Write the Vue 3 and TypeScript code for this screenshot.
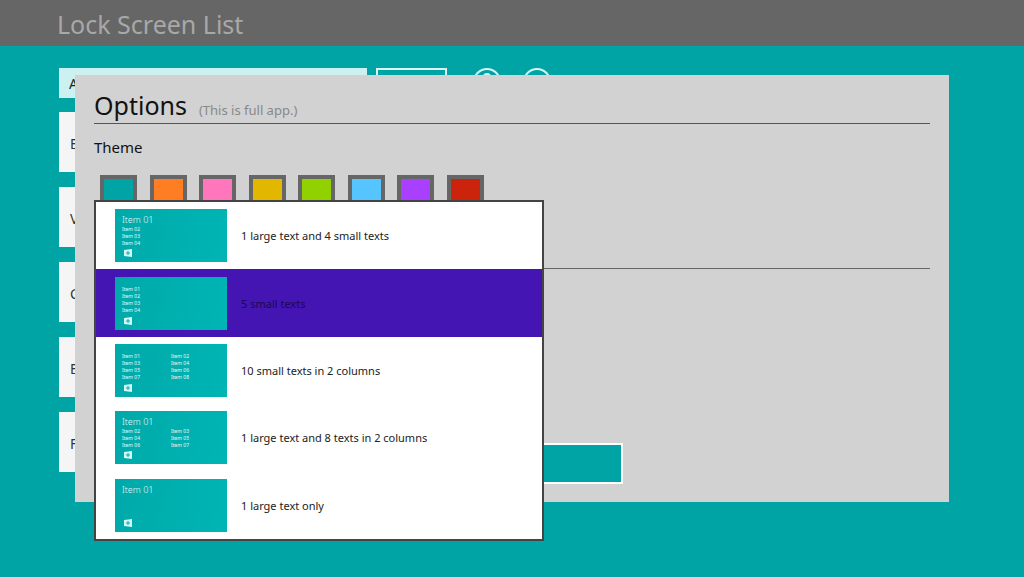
<script setup lang="ts">
import { ref } from 'vue'

interface Layout {
  label: string
  title?: string
  columns: string[][]
}

const entries = ref<string[]>(['B', 'V', 'C', 'B', 'F'])
const draft = ref('A')
const theme = ref('teal')
const selected = ref(1)

const themes = [
  { name: 'teal', color: '#00a4a4' },
  { name: 'orange', color: '#ff7d23' },
  { name: 'pink', color: '#ff76bc' },
  { name: 'yellow', color: '#e1b700' },
  { name: 'green', color: '#91d100' },
  { name: 'blue', color: '#56c5ff' },
  { name: 'purple', color: '#aa40ff' },
  { name: 'red', color: '#cc240c' },
]

const layouts: Layout[] = [
  { label: '1 large text and 4 small texts', title: 'Item 01', columns: [['Item 02', 'Item 03', 'Item 04']] },
  { label: '5 small texts', columns: [['Item 01', 'Item 02', 'Item 03', 'Item 04']] },
  {
    label: '10 small texts in 2 columns',
    columns: [
      ['Item 01', 'Item 03', 'Item 05', 'Item 07'],
      ['Item 02', 'Item 04', 'Item 06', 'Item 08'],
    ],
  },
  {
    label: '1 large text and 8 texts in 2 columns',
    title: 'Item 01',
    columns: [
      ['Item 02', 'Item 04', 'Item 06'],
      ['Item 03', 'Item 05', 'Item 07'],
    ],
  },
  { label: '1 large text only', title: 'Item 01', columns: [] },
]
</script>

<template>
  <div class="app">
    <header class="topbar"><h1>Lock Screen List</h1></header>

    <main class="page">
      <div class="toolbar">
        <input v-model="draft" class="draft" type="text" aria-label="New item" />
        <button class="add" type="button" aria-label="Add"></button>
        <button class="round first" type="button" aria-label="Help">
          <svg viewBox="0 0 28 28" aria-hidden="true">
            <circle cx="14" cy="14" r="13" />
            <path d="M11 9a3 3 0 1 1 3 3v5M14 20v2" />
          </svg>
        </button>
        <button class="round" type="button" aria-label="More">
          <svg viewBox="0 0 28 28" aria-hidden="true">
            <circle cx="14" cy="14" r="13" />
            <path d="M9 14h10" />
          </svg>
        </button>
      </div>
      <ul class="entries">
        <li v-for="(entry, i) in entries" :key="i">{{ entry }}</li>
      </ul>
    </main>

    <section class="dialog" role="dialog" aria-labelledby="options-title">
      <div class="heading">
        <h2 id="options-title">Options</h2>
        <span>(This is full app.)</span>
      </div>
      <h3 id="theme-title">Theme</h3>
      <div class="swatches" role="radiogroup" aria-labelledby="theme-title">
        <input
          v-for="t in themes"
          :key="t.name"
          v-model="theme"
          type="radio"
          name="theme"
          :value="t.name"
          :aria-label="t.name"
          :style="{ backgroundColor: t.color }"
        />
      </div>
      <hr />
      <button class="action" type="button" aria-label="Apply"></button>

      <div class="menu" role="listbox" aria-label="Tile layout">
        <button
          v-for="(item, i) in layouts"
          :key="item.label"
          type="button"
          role="option"
          class="option"
          :class="{ active: i === selected }"
          :aria-selected="i === selected"
          @click="selected = i"
        >
          <span class="tile" :class="{ titled: item.title }">
            <span v-if="item.title" class="tile-title">{{ item.title }}</span>
            <span class="tile-columns">
              <span v-for="(column, c) in item.columns" :key="c" class="tile-column">
                <span v-for="line in column" :key="line">{{ line }}</span>
              </span>
            </span>
            <svg class="logo" viewBox="0 0 8 8" aria-hidden="true">
              <path class="plate" d="M0 1 8 0V8L0 7Z" />
              <path class="cross" d="M4 2v4M2 4h4" />
            </svg>
          </span>
          <span class="option-label">{{ item.label }}</span>
        </button>
      </div>
    </section>
  </div>
</template>

<style>
body {
  margin: 0;
  background: #00a4a4;
}
</style>

<style scoped>
.app {
  position: relative;
  box-sizing: border-box;
  min-height: 100vh;
  background: #00a4a4;
  color: #111;
  font-family: "Noto Sans", "Open Sans", sans-serif;
}

.app * {
  box-sizing: border-box;
}

button,
input {
  margin: 0;
  font-family: inherit;
}

.topbar {
  display: flex;
  align-items: center;
  height: 46px;
  padding: 2px 57px 0;
  background: #666;
}

h1 {
  margin: 0;
  color: #a8a8a8;
  font-size: 25px;
  font-weight: 400;
  line-height: 44px;
}

.page {
  padding: 22px 59px 0;
}

.toolbar {
  display: flex;
  align-items: flex-start;
  margin-bottom: 14px;
}

.draft {
  width: 308px;
  height: 30px;
  padding: 0 10px;
  border: 0;
  border-radius: 0;
  background: #cdf0f0;
  color: #222;
  font-size: 14px;
}

.add {
  width: 71px;
  height: 30px;
  margin-left: 9px;
  border: 2px solid #d8f4f4;
  background: transparent;
}

.round {
  width: 28px;
  height: 28px;
  margin-left: 22px;
  padding: 0;
  border: 0;
  background: transparent;
}

.round.first {
  margin-left: 26px;
}

.round svg {
  display: block;
  fill: none;
  stroke: #d8f4f4;
  stroke-width: 2;
}

.entries {
  display: grid;
  gap: 15px;
  width: 308px;
  margin: 0;
  padding: 0;
  list-style: none;
}

.entries li {
  height: 60px;
  padding-left: 11px;
  background: #f5f5f5;
  color: #333;
  font-size: 14px;
  line-height: 64px;
}

.dialog {
  position: absolute;
  top: 75px;
  right: 75px;
  left: 75px;
  padding: 13px 19px 18px;
  background: #d2d2d2;
}

.heading {
  display: flex;
  align-items: baseline;
  gap: 12px;
  border-bottom: 1px solid #555;
}

h2 {
  margin: 0;
  font-size: 25px;
  font-weight: 400;
  line-height: 35px;
}

.heading span {
  color: #888;
  font-size: 13px;
}

h3 {
  margin: 12px 0 16px;
  font-size: 15px;
  font-weight: 400;
  line-height: 23px;
}

.swatches {
  display: flex;
  justify-content: space-between;
  width: 384px;
  margin-left: 6px;
}

.swatches input {
  width: 37px;
  height: 37px;
  border: 4px solid #666;
  border-radius: 0;
  appearance: none;
}

hr {
  margin: 56px 0 174px;
  border: 0;
  border-top: 1px solid #666;
}

.action {
  display: block;
  width: 529px;
  height: 41px;
  border: 2px solid #fff;
  background: #00a4a4;
}

.menu {
  position: absolute;
  top: 125px;
  left: 19px;
  display: grid;
  grid-auto-rows: 1fr;
  width: 450px;
  min-height: 341px;
  border: 2px solid #444;
  background: #fff;
}

.option {
  display: flex;
  align-items: center;
  gap: 14px;
  padding: 0 19px;
  border: 0;
  background: #fff;
  color: #222;
  font-size: 11px;
  text-align: left;
}

.option.active {
  background: #4515b3;
  color: #1c0850;
}

.tile {
  display: flex;
  flex-direction: column;
  width: 112px;
  height: 53px;
  padding: 9px 7px 5px;
  background: linear-gradient(100deg, #00a9a9, #00b5b5);
  color: #e4fafa;
}

.tile.titled {
  padding-top: 5px;
}

.tile-title {
  font-size: 9px;
  font-weight: 300;
  line-height: 12px;
}

.tile-columns {
  display: grid;
  grid-template-columns: 1fr 1fr;
}

.tile-column {
  display: grid;
  font-size: 5px;
  line-height: 7px;
}

.logo {
  width: 8px;
  height: 8px;
  margin-top: auto;
  margin-left: 2px;
}

.plate {
  fill: #d6f5f5;
}

.cross {
  stroke: #00b0b0;
}
</style>
